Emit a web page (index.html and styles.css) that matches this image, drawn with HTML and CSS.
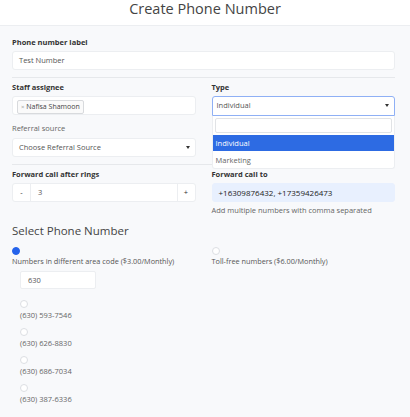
FILE: index.html
```html
<!DOCTYPE html>
<html>
<head>
<meta charset="utf-8">
<link rel="stylesheet" href="styles.css">
</head>
<body>
<header class="top">Create Phone Number</header>
<main class="form">
  <div class="field">
    <label class="lbl">Phone number label</label>
    <div class="input">Test Number</div>
  </div>
  <hr class="divider">
  <div class="grid">
    <div class="field">
      <label class="lbl">Staff assignee</label>
      <div class="input tags"><span class="tag"><span class="x">×</span> Nafisa Shamoon</span></div>
    </div>
    <div class="field type">
      <label class="lbl">Type</label>
      <div class="input select focus">Individual<span class="caret"></span></div>
      <div class="dropdown">
        <div class="search"></div>
        <div class="opt active">Individual</div>
        <div class="opt">Marketing</div>
      </div>
    </div>
    <div class="field">
      <label class="lbl light">Referral source</label>
      <div class="input select">Choose Referral Source<span class="caret"></span></div>
    </div>
    <div></div>
  </div>
  <hr class="divider">
  <div class="grid">
    <div class="field">
      <label class="lbl">Forward call after rings</label>
      <div class="group">
        <span class="btn">-</span>
        <span class="gin">3</span>
        <span class="btn">+</span>
      </div>
    </div>
    <div class="field">
      <label class="lbl">Forward call to</label>
      <div class="input auto">+16309876432, +17359426473</div>
      <div class="help">Add multiple numbers with comma separated</div>
    </div>
  </div>
  <h2 class="heading">Select Phone Number</h2>
  <div class="grid">
    <div class="choice">
      <span class="radio on"></span>
      <div class="clabel">Numbers in different area code ($3.00/Monthly)</div>
      <div class="area">630</div>
      <ul class="nums">
        <li><span class="radio"></span><div class="num">(630) 593-7546</div></li>
        <li><span class="radio"></span><div class="num">(630) 626-8830</div></li>
        <li><span class="radio"></span><div class="num">(630) 686-7034</div></li>
        <li><span class="radio"></span><div class="num">(630) 387-6336</div></li>
      </ul>
    </div>
    <div class="choice">
      <span class="radio"></span>
      <div class="clabel">Toll-free numbers ($6.00/Monthly)</div>
    </div>
  </div>
</main>
</body>
</html>
```
FILE: styles.css
```css
* { box-sizing: border-box; }
html, body { margin: 0; padding: 0; }
body {
  font-family: "Open Sans", "DejaVu Sans", sans-serif;
  background: #f8f9fb;
  color: #555;
  width: 410px;
  height: 417px;
  overflow: hidden;
}
.top {
  height: 26px;
  background: #fff;
  border-bottom: 1px solid #eceef1;
  text-align: center;
  font-size: 14.5px;
  line-height: 17px;
  color: #444;
  padding-top: 0;
}
.form {
  padding: 10px 15px 0 12px;
}
.field { position: relative; }
.lbl {
  display: block;
  font-size: 7.5px;
  font-weight: 700;
  color: #333;
  line-height: 12px;
  margin-bottom: 3px;
}
.lbl.light { font-weight: 400; color: #666; margin-bottom: 4px; }
.input {
  height: 19px;
  background: #fff;
  border: 1px solid #eceef1;
  border-radius: 3px;
  font-size: 7.5px;
  line-height: 17px;
  padding: 0 6px;
  color: #555;
  position: relative;
}
.divider {
  border: 0;
  border-top: 1px solid #e6e8eb;
  margin: 7px 0 3px;
  height: 0;
}
.grid {
  display: grid;
  grid-template-columns: 1fr 1fr;
  column-gap: 16px;
}
.grid > .field:nth-child(3) { margin-top: 6px; }
.tags { padding: 1px 4px; }
.tag {
  display: inline-block;
  border: 1px solid #d8dadd;
  border-radius: 2px;
  background: #fafafa;
  font-size: 7px;
  line-height: 12px;
  padding: 0 3px;
  color: #444;
  margin-top: 1px;
}
.tag .x { color: #999; font-size: 6px; }
.select { padding-left: 6px; }
.caret {
  position: absolute;
  right: 5px;
  top: 7px;
  width: 0; height: 0;
  border-left: 2.5px solid transparent;
  border-right: 2.5px solid transparent;
  border-top: 3px solid #333;
}
.focus {
  border-color: #8fb0f5;
  border-radius: 3px 3px 0 0;
  padding-left: 4px;
  height: 20px;
}
.dropdown {
  position: absolute;
  left: 0; right: 0;
  top: 35px;
  background: #fff;
  border: 1px solid #eceef1;
  border-top: 0;
  border-radius: 0 0 3px 3px;
  z-index: 5;
  padding-top: 2px;
}
.search {
  height: 15px;
  margin: 0 2px 2px;
  border: 1px solid #e1e3e6;
  border-radius: 2px;
}
.opt {
  height: 16px;
  line-height: 16px;
  font-size: 7.5px;
  padding: 0 3px;
  color: #666;
}
.opt.active { background: #2d6be3; color: #fff; margin-bottom: 1px; }
.group {
  display: flex;
  height: 19px;
  background: #fff;
  border: 1px solid #eceef1;
  border-radius: 3px;
  font-size: 7.5px;
  line-height: 17px;
}
.btn {
  width: 17px;
  text-align: center;
  color: #333;
}
.gin {
  flex: 1;
  border-left: 1px solid #eceef1;
  border-right: 1px solid #eceef1;
  padding-left: 7px;
  color: #555;
}
.auto { background: #e8f0fe; border-color: #e8f0fe; color: #222; font-size: 8px; }
.help {
  font-size: 7.5px;
  color: #666;
  line-height: 12px;
  margin-top: 2px;
}
.heading {
  font-size: 11.5px;
  font-weight: 400;
  color: #444;
  margin: 8px 0 9px;
  line-height: 14px;
}
.radio {
  display: block;
  width: 8px; height: 8px;
  border-radius: 50%;
  border: 1px solid #dcdfe3;
  background: #fff;
}
.radio.on { background: #2563eb; border-color: #2563eb; }
.clabel {
  font-size: 7.3px;
  color: #555;
  line-height: 12px;
  margin-top: 0;
}
.area {
  margin: 4px 0 0 8px;
  width: 76px;
  height: 18px;
  background: #fff;
  border: 1px solid #eceef1;
  border-radius: 2px;
  font-size: 7.5px;
  line-height: 16px;
  padding-left: 7px;
  color: #555;
}
.nums { list-style: none; margin: 0; padding: 0 0 0 8px; }
.nums li { margin-top: 7px; }
.nums li:first-child { margin-top: 11px; }
.num { font-size: 7.5px; line-height: 12px; color: #666; margin-top: 1px; }
```
